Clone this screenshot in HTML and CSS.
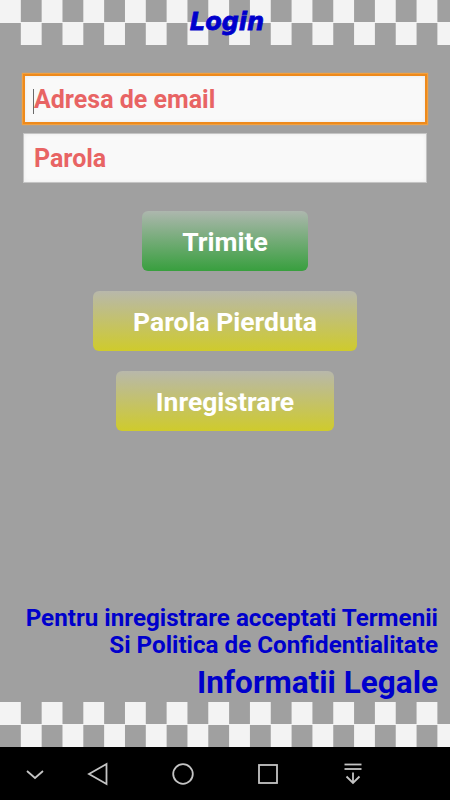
FILE: index.html
```html
<!DOCTYPE html>
<html lang="ro">

<head>
    <meta charset="UTF-8">
    <link rel="stylesheet" href="styles.css">
</head>

<body>
    <div class="screen">
        <header class="checker top-bar">
            <h1 class="title">Login</h1>
        </header>

        <main class="login-form">
            <div class="field field-focus">
                <input type="email" placeholder="Adresa de email">
            </div>
            <div class="field">
                <input type="password" placeholder="Parola">
            </div>

            <div class="buttons">
                <button class="btn btn-green">Trimite</button>
                <button class="btn btn-yellow">Parola Pierduta</button>
                <button class="btn btn-yellow">Inregistrare</button>
            </div>
        </main>

        <div class="legal">
            <p class="legal-note">Pentru inregistrare acceptati Termenii<br>Si Politica de Confidentialitate</p>
            <a class="legal-link" href="#">Informatii Legale</a>
        </div>

        <div class="checker bottom-bar"></div>

        <nav class="nav-bar">
            <!-- ascunde tastatura -->
            <svg class="nav-icon nav-hide" viewBox="0 0 24 24">
                <polyline points="4,9 12,16 20,9" />
            </svg>
            <svg class="nav-icon" viewBox="0 0 24 24">
                <polygon points="20.5,2 20.5,22 3,12" />
            </svg>
            <svg class="nav-icon" viewBox="0 0 24 24">
                <circle cx="12" cy="12" r="9.8" />
            </svg>
            <svg class="nav-icon" viewBox="0 0 24 24">
                <rect x="3" y="3" width="18" height="18" />
            </svg>
            <svg class="nav-icon" viewBox="0 0 24 24">
                <line x1="3.5" y1="2.5" x2="20.5" y2="2.5" />
                <line x1="3.5" y1="7" x2="20.5" y2="7" />
                <line x1="12" y1="10.5" x2="12" y2="21" />
                <polyline points="5.5,14.5 12,21 18.5,14.5" />
            </svg>
        </nav>
    </div>
</body>

</html>
```

FILE: styles.css
```css
body {
    margin: 0;
    background-color: #a0a0a0;
    font-family: Roboto, "Liberation Sans", Arial, sans-serif;
}

.screen {
    height: 800px;
    display: flex;
    flex-direction: column;
}

/* tabla de sah sus si jos */
.checker {
    height: 45px;
    flex-shrink: 0;
    background-image: conic-gradient(#a0a0a0 0 25%, #f3f3f3 0 50%, #a0a0a0 0 75%, #f3f3f3 0);
    background-size: 41.67px 45px;
}

.top-bar {
    display: flex;
    justify-content: center;
}

.title {
    margin: 0;
    padding-top: 8px;
    padding-left: 4px;
    font-family: "DejaVu Sans", sans-serif;
    font-size: 24px;
    font-weight: bold;
    font-style: italic;
    line-height: 28px;
    color: #0000cc;
    -webkit-text-stroke: 0.8px #0000cc;
}

.login-form {
    flex: 1;
    padding: 29px 23px 0;
}

.field {
    position: relative;
    height: 50px;
    margin-bottom: 9px;
    background-color: #f9f9f9;
    border: 1px solid #c4c4c4;
    box-sizing: border-box;
    box-shadow: inset 0 0 4px rgba(0, 0, 0, 0.06);
}

.field-focus {
    border: 2px solid #ee8a1c;
    box-shadow: 0 0 1px 1px #f0a040, inset 0 0 4px rgba(0, 0, 0, 0.06);
}

/* cursorul din campul activ */
.field-focus::before {
    content: "";
    position: absolute;
    left: 8px;
    top: 13px;
    width: 1px;
    height: 25px;
    background-color: #6a6a6a;
}

.field input {
    width: 100%;
    height: 100%;
    box-sizing: border-box;
    padding: 0 0 0 10px;
    border: none;
    outline: none;
    background: transparent;
    font-family: Roboto, sans-serif;
    font-size: 25px;
    font-weight: bold;
    color: #333;
}

.field-focus input {
    padding-left: 9px;
}

.field input::placeholder {
    color: #e86464;
    opacity: 1;
}

.buttons {
    display: flex;
    flex-direction: column;
    align-items: center;
    gap: 20px;
    margin-top: 28px;
}

.btn {
    height: 60px;
    padding: 0 40px;
    border: none;
    border-radius: 6px;
    color: #fff;
    font-family: Roboto, sans-serif;
    font-size: 26.5px;
    font-weight: bold;
    cursor: pointer;
}

.btn-green {
    background-image: linear-gradient(#adb7ae, #389f3e);
}

.btn-yellow {
    background-image: linear-gradient(#b8b8ab, #cfcb2c);
}

.legal {
    padding: 0 12px 1px 0;
    text-align: right;
    color: #0000cc;
    font-weight: bold;
}

.legal-note {
    margin: 0 0 6px;
    font-size: 24.2px;
    line-height: 27px;
}

.legal-link {
    display: block;
    font-size: 31.5px;
    line-height: 36px;
    color: #0000cc;
    text-decoration: none;
}

.nav-bar {
    height: 53px;
    flex-shrink: 0;
    background-color: #000;
    display: flex;
    align-items: center;
    gap: 61px;
    padding-left: 23px;
}

.nav-icon {
    width: 24px;
    height: 24px;
    fill: none;
    stroke: #c4c4c4;
    stroke-width: 1.8;
}

.nav-hide {
    margin-right: -22.5px;
}
```
